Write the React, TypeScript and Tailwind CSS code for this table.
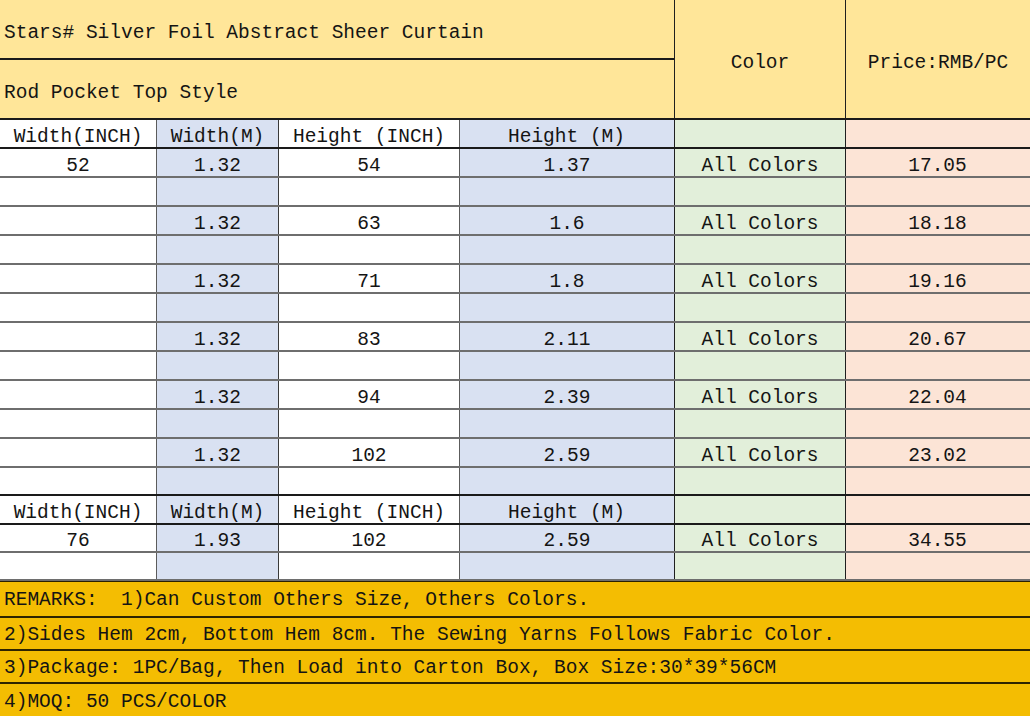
const COLS = ["w-[157px]", "w-[122px]", "w-[181px]", "w-[215px]", "w-[171px]", "w-[184px]"];
const BG = ["bg-white", "bg-[#d9e1f2]", "bg-white", "bg-[#d9e1f2]", "bg-[#e2efda]", "bg-[#fce4d6]"];
const VLINE = ["border-[#5c5c5c]", "border-[#3a3a3a]", "border-[#5c5c5c]", "border-[#1f1f1f]", "border-[#1f1f1f]", "border-transparent"];

type Row = { cells: string[]; kind: "head" | "data"; h: string };

const sizes = [
  { h: "54", hm: "1.37", price: "17.05" },
  { h: "63", hm: "1.6", price: "18.18" },
  { h: "71", hm: "1.8", price: "19.16" },
  { h: "83", hm: "2.11", price: "20.67" },
  { h: "94", hm: "2.39", price: "22.04" },
  { h: "102", hm: "2.59", price: "23.02" },
];

const header = ["Width(INCH)", "Width(M)", "Height (INCH)", "Height (M)", "", ""];
const blank = ["", "", "", "", "", ""];

const rows: Row[] = [
  { cells: header, kind: "head", h: "h-[29px]" },
  ...sizes.flatMap((s, i) => [
    { cells: [i === 0 ? "52" : "", "1.32", s.h, s.hm, "All Colors", s.price], kind: "data" as const, h: "h-[29px]" },
    { cells: blank, kind: "data" as const, h: i === 5 ? "h-[28px]" : "h-[29px]" },
  ]),
  { cells: header, kind: "head", h: "h-[29px]" },
  { cells: ["76", "1.93", "102", "2.59", "All Colors", "34.55"], kind: "data", h: "h-[28px]" },
  { cells: blank, kind: "data", h: "h-[28px]" },
];

const remarks = [
  { text: "REMARKS:  1)Can Custom Others Size, Others Colors.", h: "h-[36px]" },
  { text: "2)Sides Hem 2cm, Bottom Hem 8cm. The Sewing Yarns Follows Fabric Color.", h: "h-[33px]" },
  { text: "3)Package: 1PC/Bag, Then Load into Carton Box, Box Size:30*39*56CM", h: "h-[33px]" },
  { text: "4)MOQ: 50 PCS/COLOR", h: "h-[33px]" },
];

export default function App() {
  return (
    <div className="w-[1030px] h-[716px] overflow-hidden bg-white text-[#141414] font-['Liberation_Mono',monospace] text-[19.5px] leading-none">
      {/* title block */}
      <div className="flex h-[120px] bg-[#ffe699] border-b-2 border-[#1a1a1a]">
        <div className="flex w-[675px] flex-col border-r border-[#1f1f1f]">
          <div className="flex h-[60px] items-center border-b-2 border-[#1a1a1a] pl-[4px] pt-[10px]">
            Stars# Silver Foil Abstract Sheer Curtain
          </div>
          <div className="flex h-[58px] items-center pl-[4px] pt-[10px]">Rod Pocket Top Style</div>
        </div>
        <div className="flex w-[171px] items-center justify-center border-r border-[#1f1f1f] pt-[10px]">Color</div>
        <div className="flex w-[184px] items-center justify-center pt-[10px]">Price:RMB/PC</div>
      </div>

      {rows.map((r, ri) => (
        <div
          key={ri}
          className={`flex ${r.h} ${
            r.kind === "head" || rows[ri + 1]?.kind === "head"
              ? "border-b-2 border-[#1a1a1a]"
              : "border-b-2 border-[#6e6e6e]"
          }`}
        >
          {r.cells.map((c, ci) => (
            <div
              key={ci}
              className={`flex items-center pt-[8px] ${COLS[ci]} ${BG[ci]} border-r ${VLINE[ci]} ${
                r.kind === "head" && ci === 3 ? "justify-start pl-[48px]" : "justify-center"
              }`}
            >
              {c}
            </div>
          ))}
        </div>
      ))}

      {/* remarks */}
      <div className="bg-[#f4bd02] border-t border-[#2a2000]">
        {remarks.map((m, i) => (
          <div
            key={i}
            className={`flex ${m.h} items-center pl-[4px] pt-[4px] whitespace-pre ${
              i < remarks.length - 1 ? "border-b-2 border-[#2e2400]" : ""
            }`}
          >
            {m.text}
          </div>
        ))}
      </div>
    </div>
  );
}
